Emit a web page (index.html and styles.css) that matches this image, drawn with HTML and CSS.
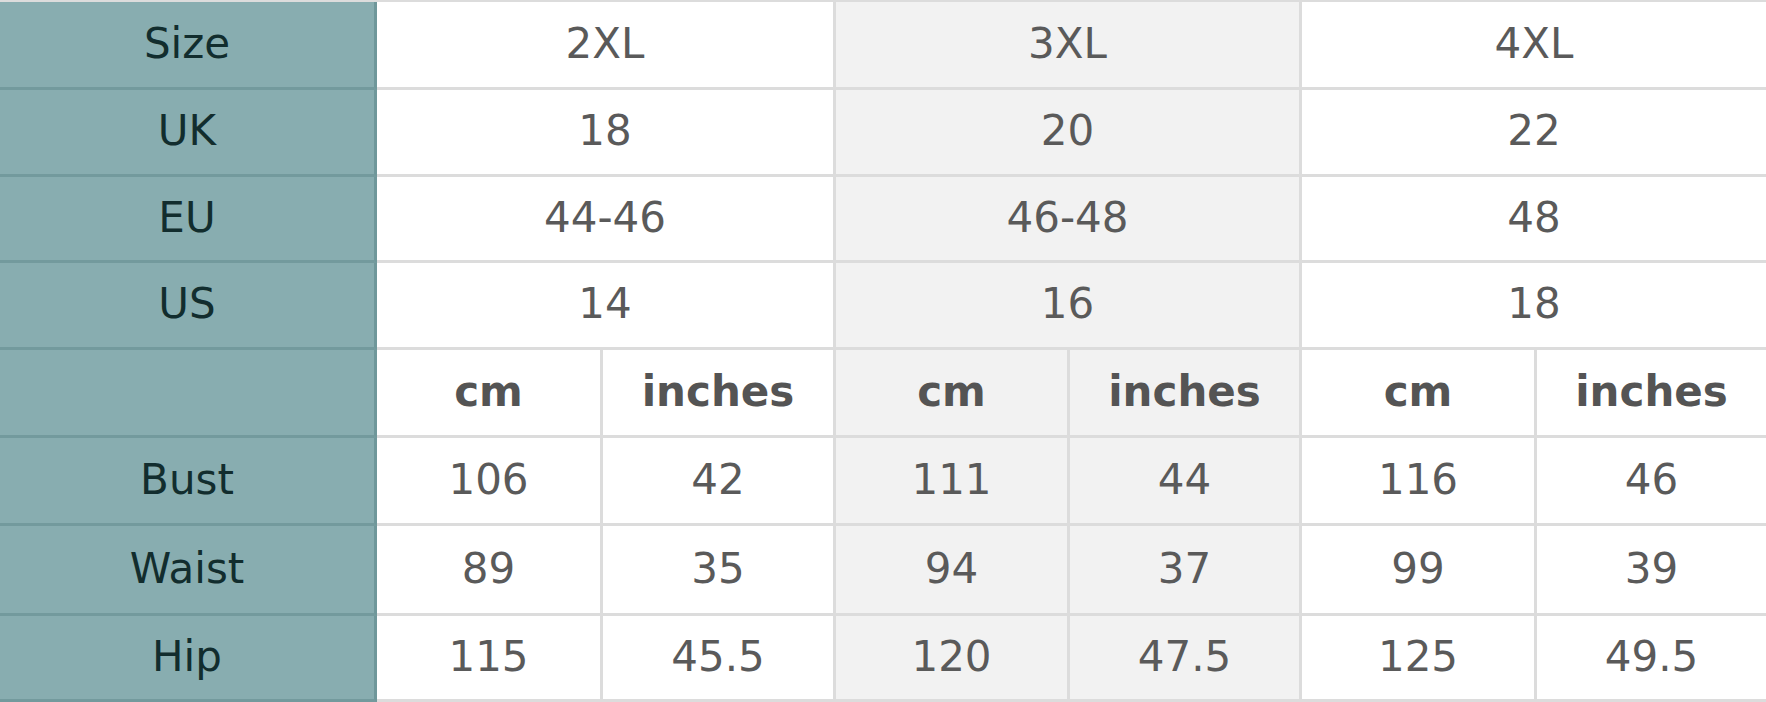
FILE: index.html
```html
<!DOCTYPE html>
<html lang="en">
<head>
<meta charset="utf-8">
<title>Size chart</title>
<link rel="stylesheet" href="styles.css">
</head>
<body>
<div class="chart">
  <div class="cell label">Size</div>
  <div class="cell span2">2XL</div>
  <div class="cell span2 alt">3XL</div>
  <div class="cell span2 last">4XL</div>

  <div class="cell label">UK</div>
  <div class="cell span2">18</div>
  <div class="cell span2 alt">20</div>
  <div class="cell span2 last">22</div>

  <div class="cell label">EU</div>
  <div class="cell span2">44-46</div>
  <div class="cell span2 alt">46-48</div>
  <div class="cell span2 last">48</div>

  <div class="cell label">US</div>
  <div class="cell span2">14</div>
  <div class="cell span2 alt">16</div>
  <div class="cell span2 last">18</div>

  <div class="cell label"></div>
  <div class="cell unit">cm</div>
  <div class="cell unit">inches</div>
  <div class="cell unit alt">cm</div>
  <div class="cell unit alt">inches</div>
  <div class="cell unit">cm</div>
  <div class="cell unit last">inches</div>

  <div class="cell label">Bust</div>
  <div class="cell">106</div>
  <div class="cell">42</div>
  <div class="cell alt">111</div>
  <div class="cell alt">44</div>
  <div class="cell">116</div>
  <div class="cell last">46</div>

  <div class="cell label">Waist</div>
  <div class="cell">89</div>
  <div class="cell">35</div>
  <div class="cell alt">94</div>
  <div class="cell alt">37</div>
  <div class="cell">99</div>
  <div class="cell last">39</div>

  <div class="cell label">Hip</div>
  <div class="cell">115</div>
  <div class="cell">45.5</div>
  <div class="cell alt">120</div>
  <div class="cell alt">47.5</div>
  <div class="cell">125</div>
  <div class="cell last">49.5</div>
</div>
</body>
</html>
```
FILE: styles.css
```css
html, body {
  margin: 0;
  padding: 0;
  background: #ffffff;
  overflow: hidden;
}

.chart {
  display: grid;
  grid-template-columns: 377px 226px 233px 234px 232px 235px 229px;
  grid-template-rows: 88px 87px 86px 87px 88px 88px 90px 86px;
  border-top: 2px solid #dcdcdc;
  width: 1766px;
  font-family: "DejaVu Sans", "Liberation Sans", sans-serif;
  font-size: 42px;
  color: #5a5a5a;
}

.cell {
  box-sizing: border-box;
  display: flex;
  align-items: center;
  justify-content: center;
  border-right: 3px solid #dcdcdc;
  border-bottom: 3px solid #dcdcdc;
  background: #ffffff;
  padding-bottom: 3px;
}

.span2 {
  grid-column: span 2;
}

.alt {
  background: #f2f2f2;
}

.last {
  border-right: none;
}

.label {
  background: #88adb0;
  color: #122d2e;
  border-right-color: #6f979a;
  border-bottom-color: #739a9d;
}

.unit {
  font-weight: bold;
  color: #545454;
}
```
